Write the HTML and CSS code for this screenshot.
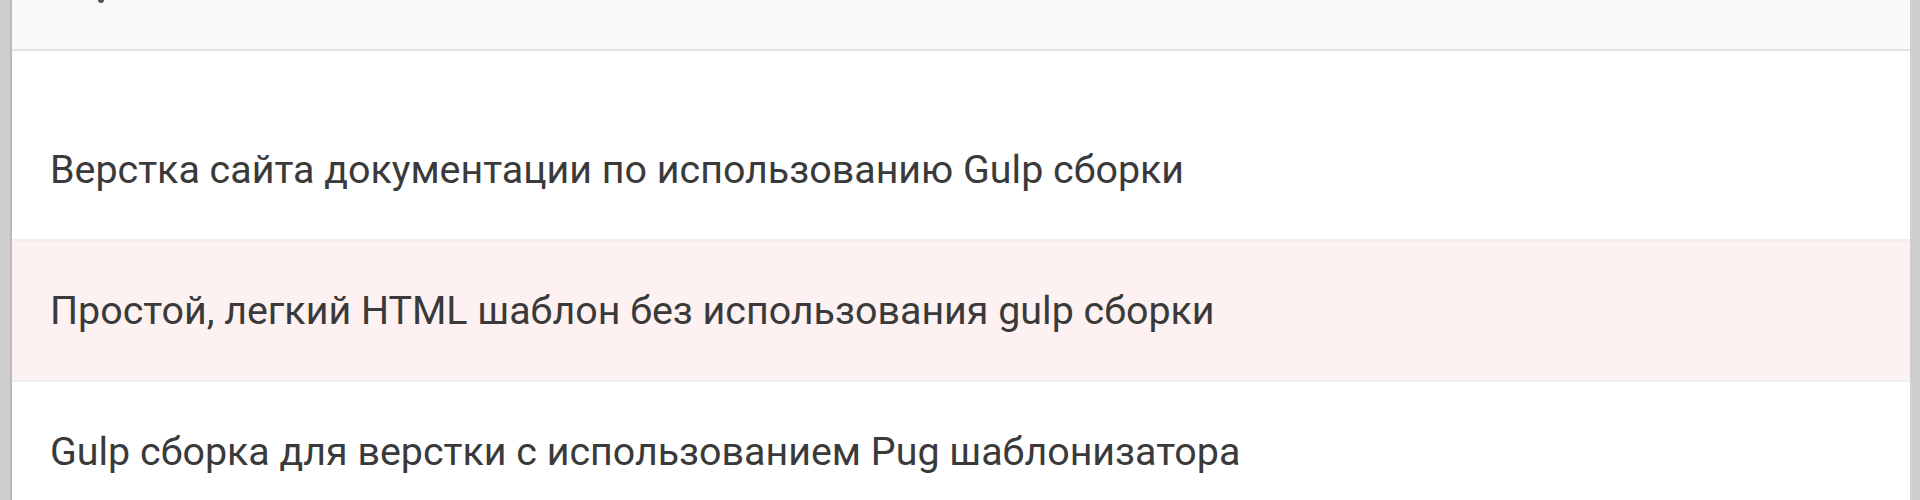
FILE: index.html
```html
<!DOCTYPE html>
<html lang="ru">
<head>
<meta charset="utf-8">
<title>Шаблоны</title>
<link rel="stylesheet" href="styles.css">
</head>
<body>
<div class="frame">
  <div class="card">
    <div class="search">
      <span class="search-icon"></span>
      <span class="search-text">Поиск</span>
      <span class="search-right">Esc</span>
    </div>
    <div class="gap"></div>
    <ul class="list">
      <li class="item">Верстка сайта документации по использованию Gulp сборки</li>
      <li class="item item-active">Простой, легкий HTML шаблон без использования gulp сборки</li>
      <li class="item">Gulp сборка для верстки с использованием Pug шаблонизатора</li>
    </ul>
  </div>
</div>
</body>
</html>
```

FILE: styles.css
```css
html, body {
  margin: 0;
  padding: 0;
  height: 100%;
  overflow: hidden;
}
body {
  background: #cfcfcf;
  font-family: Roboto, "Liberation Sans", sans-serif;
}
.frame {
  padding: 0 10px;
  height: 100%;
}
.card {
  background: #ffffff;
  border-left: 2px solid #b9b9b9;
  height: 100%;
}
.search {
  height: 49px;
  background: #f9f9f9;
  border-bottom: 2px solid #e3e3e3;
  display: flex;
  align-items: flex-start;
  padding: 0 30px 0 48px;
  overflow: hidden;
}
.search-icon {
  width: 6px;
  height: 6px;
  border-radius: 50%;
  background: #555;
  margin-top: -3px;
  margin-left: 38px;
}
.search-text {
  margin-top: -40px;
  margin-left: 34px;
  font-size: 39px;
  line-height: 44px;
  color: #ececec;
  flex: 1;
}
.search-right {
  margin-top: -40px;
  font-size: 39px;
  line-height: 44px;
  color: #ececec;
}
.gap {
  height: 49px;
}
.list {
  list-style: none;
  margin: 0;
  padding: 0;
}
.item {
  height: 139px;
  border-bottom: 2px solid #eeeeee;
  display: flex;
  align-items: center;
  padding-left: 38px;
  font-size: 39.4px;
  color: #3a3a3a;
}
.item-active {
  background: #fdf1f1;
}
```
